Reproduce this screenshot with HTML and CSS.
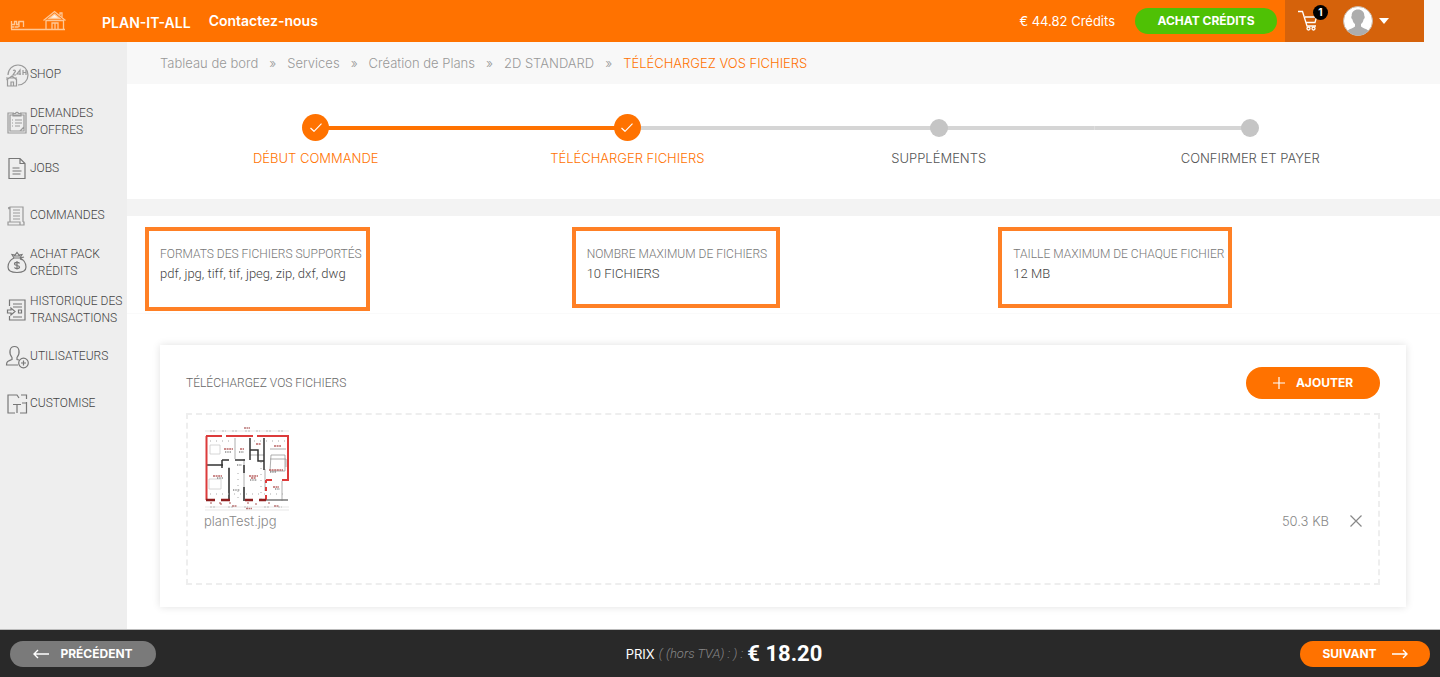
FILE: index.html
```html
<!DOCTYPE html>
<html lang="fr">
<head>
<meta charset="utf-8">
<meta name="viewport" content="width=device-width, initial-scale=1">
<title>PLAN-IT-ALL – Téléchargez vos fichiers</title>
<link rel="stylesheet" href="styles.css">
</head>
<body>
<div class="page">
  <header class="topbar">
    <a class="logo" href="#" aria-label="Accueil">
      <svg width="56" height="22" viewBox="0 0 56 22" fill="none" stroke="#ffc795" stroke-width="1.3">
        <path d="M1 19.500h54M1.500 19v-8M1.500 11.500v3h3v-3h2v3h2v-3M9 17v-5.500h4.500V17M4.500 17h4M1 17h3"/>
        <path d="M33.500 10.500 44.500 1.500l11 9M36 10v9M53.500 10v9M36 10.500h17.500M42 19v-6h6v6M45 13v6"/>
        <path d="M39 8.500 44.500 4l5.500 4.500z" fill="#fff3e6"/>
        <path d="M50 5V3h2v4"/>
      </svg>
    </a>
    <a class="brand" href="#">PLAN-IT-ALL</a>
    <a class="contact" href="#">Contactez-nous</a>
    <span class="credits">€ 44.82 Crédits</span>
    <button class="btn btn-green" type="button">ACHAT CRÉDITS</button>
    <div class="account">
      <a class="cart" href="#" aria-label="Panier">
        <svg width="21" height="22" viewBox="0 0 21 22" fill="none" stroke="#fff" stroke-width="1.3">
          <path d="M0 1.500h4.500L9 16h9M7 7h11.500L17 12.500H8"/>
          <circle cx="10.500" cy="18.500" r="1.500"/><circle cx="15.500" cy="18.500" r="1.500"/>
        </svg>
        <span class="badge">1</span>
      </a>
      <button class="profile" type="button" aria-label="Mon compte">
        <svg width="30" height="30" viewBox="0 0 30 30">
          <circle cx="15" cy="15" r="14.500" fill="#fff" stroke="#c9b6a6"/>
          <path d="M15 3.500c4 0 6.500 2.500 6.300 6.500 1 .8.200 3-.8 3.500-.3 2-1.200 3.500-2.500 4.500v2.500c1.500 1.800 5 2 7.500 4.200A14 14 0 0 1 4.500 24.700C7 22.500 10.500 22.300 12 20.500V18c-1.300-1-2.200-2.500-2.500-4.500-1-.5-1.800-2.700-.8-3.500C8.500 6 11 3.500 15 3.500z" fill="#adadad"/>
        </svg>
        <svg width="10" height="6" viewBox="0 0 10 6"><path d="M0 0h10L5 6z" fill="#fff"/></svg>
      </button>
    </div>
  </header>

  <div class="body">
    <nav class="sidebar" aria-label="Menu principal">
      <a href="#">
        <svg viewBox="0 0 24 24" class="pale"><path d="M3 12a10 10 0 1 1 10 10"/><path d="M1.500 17 7 13l5 4M2.500 17v6h9v-6M6 23v-4h2.500v4M1 15h11" /><path d="M8 7.500c2-1 3 .5 2 1.500l-2 3h3M15 12V7l-3 4h4M18 7v5M21 7v5M18 9.500h3"/></svg>
        <span>SHOP</span></a>
      <a href="#">
        <svg viewBox="0 0 24 24" class="pale"><path d="M9 3H3v20h18V3h-6M5 5h14v16H5zM8 6h8V3.500h-2.500a1.600 1.600 0 0 0-3 0H8zM10 10h7M10 13h7M10 16h5M7 10h1M7 13h1M7 16h1M19 17l-4 4"/></svg>
        <span>DEMANDES D'OFFRES</span></a>
      <a href="#">
        <svg viewBox="0 0 24 24"><path d="M4 1.500h11l5 5v15H4zM15 1.500v5h5M7.500 11h7M7.500 14h9M7.500 17h8"/></svg>
        <span>JOBS</span></a>
      <a href="#">
        <svg viewBox="0 0 24 24" class="pale"><path d="M5 18V3h13v15M5 3c-2 0-2 2 0 2M3 18h12v3H3zM15 21h4v-3h-1M8 6h7M8 9h7M8 12h7M8 15h7"/></svg>
        <span>COMMANDES</span></a>
      <a href="#">
        <svg viewBox="0 0 24 24"><path d="M9 7C5 9 3 13 3 16c0 4 3 5.500 9 5.500s9-1.500 9-5.500c0-3-2-7-6-9zM9 7 7 3.500l3 .5 2-2.500L14 4l3-.5L15 7M15 7l4-1M15 8l4 1.500M9 5h6M14.500 12.500c-.5-1.500-5-1.500-5 .5s5 1 5 3-4.500 2-5 .3M12 10v8.500"/></svg>
        <span>ACHAT PACK CRÉDITS</span></a>
      <a href="#">
        <svg viewBox="0 0 24 24"><path d="M4.500 8V2H20v20H4.500v-4M8 6h9M8 9h9M8 19h9M2.500 12h3.500v-2l4 3.500-4 3.500v-2H2.500zM13.500 12h3v3h-3z"/></svg>
        <span>HISTORIQUE DES TRANSACTIONS</span></a>
      <a href="#">
        <svg viewBox="0 0 24 24"><path d="M13 20H1.500c0-4 2-4 5.500-5.500v-2C3.500 8 4.500 1.500 9.500 1.500s6 6.500 2.500 11v2l2 .5"/><circle cx="18.500" cy="18" r="4.800"/><path d="M18.500 15.500v5M16 18h5"/></svg>
        <span>UTILISATEURS</span></a>
      <a href="#">
        <svg viewBox="0 0 24 24"><path d="M9 3H3v18h7M7 3h5l2 3M16 3h5.500v4M21.500 10v11H15M21.500 11H17M8 12.500h8M12 12.500V21"/></svg>
        <span>CUSTOMISE</span></a>
    </nav>

    <main class="main">
      <nav class="crumbs" aria-label="Fil d'Ariane">
        <a href="#">Tableau de bord</a><i>»</i><a href="#">Services</a><i>»</i><a href="#">Création de Plans</a><i>»</i><a href="#">2D STANDARD</a><i>»</i><a class="current" href="#">TÉLÉCHARGEZ VOS FICHIERS</a>
      </nav>

      <ol class="steps">
        <li class="done"><span class="dot"><svg width="12" height="9" viewBox="0 0 12 9"><path d="M.5 5 4 8.300 11.500.7" fill="none" stroke="#fff" stroke-width="1.200"/></svg></span>DÉBUT COMMANDE</li>
        <li class="done"><span class="dot"><svg width="12" height="9" viewBox="0 0 12 9"><path d="M.5 5 4 8.300 11.500.7" fill="none" stroke="#fff" stroke-width="1.200"/></svg></span>TÉLÉCHARGER FICHIERS</li>
        <li><span class="dot"></span>SUPPLÉMENTS</li>
        <li><span class="dot"></span>CONFIRMER ET PAYER</li>
      </ol>

      <section class="limits">
        <div class="limit limit-formats"><h2>FORMATS DES FICHIERS SUPPORTÉS</h2><p>pdf, jpg, tiff, tif, jpeg, zip, dxf, dwg</p></div>
        <div class="limit"><h2>NOMBRE MAXIMUM DE FICHIERS</h2><p>10 FICHIERS</p></div>
        <div class="limit limit-size"><h2>TAILLE MAXIMUM DE CHAQUE FICHIER</h2><p>12 MB</p></div>
      </section>

      <section class="upload">
        <div class="upload-head">
          <h2>TÉLÉCHARGEZ VOS FICHIERS</h2>
          <button class="btn btn-add" type="button">
            <svg width="12" height="12" viewBox="0 0 12 12"><path d="M6 0v12M0 6h12" stroke="#fff" stroke-width="1.200"/></svg>AJOUTER</button>
        </div>
        <div class="dropzone">
          <svg class="thumb" width="86" height="84" viewBox="0 0 86 84" fill="none" role="img" aria-label="Aperçu du plan">
            <g stroke="#aaa" stroke-width=".7"><path d="M1 4h84M1 80h84M1 83h84" stroke="#ddd"/><path d="M6 4h5M18 4h4M28 4h5M41 4h5M52 4h4M62 4h5M74 4h5M6 80h6M24 80h5M40 80h4M60 80h5M74 80h4" stroke-dasharray="2 1"/></g>
            <path d="M40 1h6M42 81.500h6M28 79h5M70 79h5" stroke="#b77" stroke-width="1.500" stroke-dasharray="2 .5"/>
            <g stroke="#999" stroke-width=".8"><path d="M31 11v21M40 32v42M61 42v22M25 40v34M46 28h14M66 32h16v8M67 28h14v16H66zM66 22h16M78 54v20"/><path d="M5 52h12v10H5zM6 18h10v9H6z" stroke="#ccc"/></g>
            <g stroke="#333" stroke-width="1.500"><path d="M3 38h16M18 33v8M18 33h7M25 41v33M31 33h10M46 11v22M46 23h8v11h6M60 11v32M40 38v8M40 60v14"/></g>
            <path d="M62 73h22" stroke="#777" stroke-width="1.500"/>
            <path d="M2 9h16M22 9h27M53 9h31v44h-3M2.500 9v64M62 53h6M78 53h5M62 53v3M62 60v4M62 68v5" stroke="#dc3b3b" stroke-width="2"/>
            <path d="M2 73h9M17 73h9M41 73h8M55 73h7" stroke="#8e1f1f" stroke-width="2.500"/>
            <g stroke="#b66" stroke-width="1.300" stroke-dasharray="2 .6"><path d="M20 22h9M36 22h4M52 17h5M70 19h7M9 49h9M45 49h9M47 51h5M65 43h14M69 60h6"/></g>
            <g stroke="#555" stroke-width="1" stroke-dasharray="1 .7"><path d="M21 25h6M35 25h5M33 38h5M13 51h6M46 53h7M66 45h6M29 63h7M71 62h5"/></g>
            <g stroke="#aaa" stroke-dasharray="1 5"><path d="M6 14h24M50 14h32M6 67h76M34 46v28M57 35v37"/></g>
            <path d="M6 76h2M15 76h2v2M25 76h2M43 76h2M52 76v2M64 76h2" stroke="#a55"/>
          </svg>
          <div class="file">
            <span class="name">planTest.jpg</span>
            <span>50.3 KB</span>
            <button class="remove" type="button" aria-label="Supprimer planTest.jpg"><svg width="12" height="12" viewBox="0 0 12 12"><path d="m.5.5 11 11M11.500.5l-11 11" stroke="#888" stroke-width="1.200"/></svg></button>
          </div>
        </div>
      </section>
    </main>
  </div>

  <footer class="bottombar">
    <button class="btn btn-prev" type="button"><svg width="16" height="10" viewBox="0 0 16 10"><path d="M16 5H1M5 1 1 5l4 4" fill="none" stroke="#fff" stroke-width="1.400"/></svg>PRÉCÉDENT</button>
    <p class="price">PRIX <em>( (hors TVA) : ) :</em> <strong>€ 18.20</strong></p>
    <button class="btn btn-next" type="button">SUIVANT<svg width="16" height="10" viewBox="0 0 16 10"><path d="M0 5h15M11 1l4 4-4 4" fill="none" stroke="#fff" stroke-width="1.400"/></svg></button>
  </footer>
</div>
</body>
</html>
```

FILE: styles.css
```css
* { box-sizing: border-box; }
body {
  margin: 0;
  font: 300 13px/20px Inter, Roboto, sans-serif;
  color: #555;
  background: #fff;
}
a { color: inherit; text-decoration: none; }
h2, p, ol { margin: 0; padding: 0; font-weight: inherit; }
button { font: inherit; border: 0; background: none; padding: 0; cursor: pointer; }
svg { display: block; flex: none; }

.page { display: flex; flex-direction: column; min-height: 100vh; background: #f8f8f8; }

.btn {
  display: flex;
  align-items: center;
  justify-content: center;
  color: #fff;
  font-size: 12px;
  font-weight: 700;
  border-radius: 16px;
}
.btn-green { background: #4fc105; width: 142px; height: 26px; margin-right: 8px; }
.btn-add { background: #ff7200; width: 134px; height: 32px; gap: 11px; }
.btn-prev { background: #7a7a7a; width: 146px; height: 26px; gap: 11px; }
.btn-next { background: #ff7200; width: 130px; height: 26px; gap: 15px; }

.topbar {
  display: flex;
  align-items: center;
  height: 42px;
  margin-right: 16px;
  background: #ff7200;
  color: #fff;
}
.logo { margin-left: 10px; }
.brand { margin-left: 36px; font-size: 14px; font-weight: 600; padding-top: 3px; }
.contact { margin: 0 auto 0 18px; font-size: 14px; font-weight: 600; }
.credits { margin-right: 20px; font-weight: 400; }
.account {
  display: flex;
  align-items: center;
  gap: 24px;
  align-self: stretch;
  width: 139px;
  padding-left: 13px;
  background: #d5620b;
}
.cart { position: relative; }
.badge {
  position: absolute;
  top: -5px;
  left: 15px;
  width: 15px;
  height: 15px;
  border-radius: 50%;
  background: #000;
  font-size: 10px;
  line-height: 15px;
  font-weight: 700;
  text-align: center;
}
.profile { display: flex; align-items: center; gap: 6px; }

.body { display: flex; flex: 1; }
.sidebar { flex: 0 0 127px; padding-top: 9px; background: #eee; color: #444; }
.sidebar a {
  display: flex;
  align-items: center;
  gap: 1px;
  height: 47px;
  padding-left: 5px;
  font-family: Roboto, sans-serif;
  font-size: 12px;
  line-height: 17px;
}
.sidebar svg { width: 24px; height: 24px; fill: none; stroke: #777; stroke-width: 1.200; }
.sidebar .pale { stroke: #999; }

.main { flex: 1; min-width: 0; background: #fff; }
.crumbs {
  display: flex;
  gap: 11px;
  padding: 11px 33px;
  background: #f8f8f8;
  color: #999;
}
.crumbs i { font-style: normal; }
.crumbs .current { color: #ff7200; }

.steps {
  display: grid;
  grid-template-columns: repeat(4, 1fr);
  padding: 30px 34px 31px 33px;
  list-style: none;
}
.steps li { display: flex; flex-direction: column; align-items: center; gap: 7px; }
.dot {
  display: grid;
  grid-template-columns: 1fr 28px 1fr;
  align-items: center;
  justify-items: center;
  align-self: stretch;
  height: 27px;
  background: linear-gradient(#d5d5d5, #d5d5d5) center / 100% 4px no-repeat;
}
.dot::before { content: ""; grid-column: 2; grid-row: 1; width: 18px; height: 18px; border-radius: 50%; background: #c5c5c5; }
.dot svg { grid-column: 2; grid-row: 1; z-index: 1; }
.done { color: #ff7200; }
.done .dot::before { width: 27px; height: 27px; background: #ff7200; }
.done .dot { background-image: linear-gradient(#ff7200, #ff7200); }
.steps li:first-child .dot { background-size: 50% 4px; background-position: right center; }
.steps li:nth-child(2) .dot { background-image: linear-gradient(90deg, #ff7200 50%, #d5d5d5 50%); }
.steps li:last-child .dot { background-size: 50% 4px; background-position: left center; }

.limits {
  display: grid;
  grid-template-columns: repeat(3, 1fr);
  align-items: start;
  padding: 11px 15px 2px 18px;
  border-top: 17px solid #f3f3f3;
  border-bottom: 1px solid #fafafa;
}
.limit {
  width: fit-content;
  padding: 14px 9px 21px 11px;
  border: 4px solid #ff8025;
  line-height: 19px;
}
.limit h2 { font-family: Roboto, sans-serif; font-size: 12px; color: #777; }
.limit p { font-family: Roboto, sans-serif; color: #444; }
.limit-formats { padding-right: 4px; padding-bottom: 24px; }
.limit-size { padding-right: 4px; }

.upload {
  margin: 31px 34px 22px 33px;
  padding: 22px 26px;
  background: #fff;
  box-shadow: 0 0 8px rgba(0, 0, 0, .12);
}
.upload-head { display: flex; justify-content: space-between; align-items: center; margin-bottom: 14px; }
.upload-head h2 { font-family: Roboto, sans-serif; font-size: 12px; color: #666; }
.dropzone { min-height: 172px; padding: 12px 16px; border: 2px dashed #eee; }
.file { display: flex; align-items: center; color: #888; }
.name { margin-right: auto; }
.remove { margin-left: 21px; }

.bottombar {
  display: flex;
  align-items: center;
  justify-content: space-between;
  height: 48px;
  padding: 0 10px;
  border-top: 1px solid #bbb;
  background: #292929;
  color: #fff;
}
.price { display: flex; align-items: center; gap: 4px; padding-right: 8px; font-weight: 400; }
.price em { color: #888; font-family: Roboto, sans-serif; font-weight: 300; }
.price strong { font-family: Roboto, sans-serif; font-size: 22px; font-weight: 700; }
```
